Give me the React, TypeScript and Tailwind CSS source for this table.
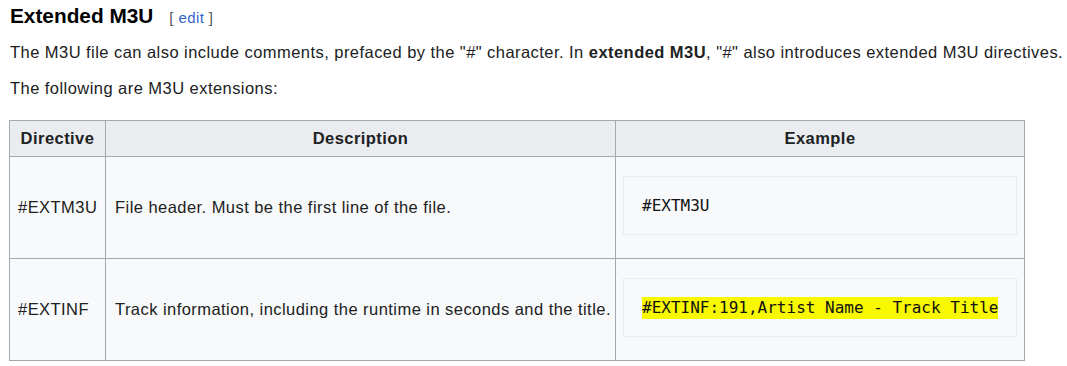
import React from "react";

const rows = [
  {
    directive: "#EXTM3U",
    description: "File header. Must be the first line of the file.",
    example: "#EXTM3U",
    highlight: false,
  },
  {
    directive: "#EXTINF",
    description:
      "Track information, including the runtime in seconds and the title.",
    example: "#EXTINF:191,Artist Name - Track Title",
    highlight: true,
  },
];

const App: React.FC = () => {
  return (
    <div
      className="bg-white text-[#202122] w-[1067px] h-[366px] overflow-hidden pl-[10px]"
      style={{ fontFamily: '"Liberation Sans", Arial, sans-serif' }}
    >
      {/* Heading */}
      <div className="flex items-baseline pt-[1px] h-[30px]">
        <h3 className="text-[20.8px] font-bold leading-[30px] text-black">
          Extended M3U
        </h3>
        <span className="ml-[16px] text-[15px] tracking-[0.4px] text-[#54595d]">
          [ <span className="text-[#3366cc]">edit</span> ]
        </span>
      </div>

      {/* Intro */}
      <p className="mt-[10px] text-[16.5px] tracking-[0.45px] leading-[24px]">
        The M3U file can also include comments, prefaced by the "#" character.
        In <b>extended M3U</b>, "#" also introduces extended M3U directives.
      </p>
      <p className="mt-[12px] text-[16.5px] tracking-[0.45px] leading-[24px]">
        The following are M3U extensions:
      </p>

      {/* Table */}
      <table className="mt-[20px] -ml-[1px] border-collapse text-[16.5px] tracking-[0.45px] bg-[#f8f9fa]">
        <thead>
          <tr className="h-[36px]">
            <th className="w-[96px] border border-[#a2a9b1] bg-[#eaecf0] font-bold text-center px-0">
              Directive
            </th>
            <th className="w-[510px] border border-[#a2a9b1] bg-[#eaecf0] font-bold text-center">
              Description
            </th>
            <th className="w-[409px] border border-[#a2a9b1] bg-[#eaecf0] font-bold text-center">
              Example
            </th>
          </tr>
        </thead>
        <tbody>
          {rows.map((row) => (
            <tr key={row.directive} className="h-[102px]">
              <td className="border border-[#a2a9b1] pl-[8px] pr-[3px] whitespace-nowrap">
                {row.directive}
              </td>
              <td className="border border-[#a2a9b1] pl-[9px] pr-[4px] whitespace-nowrap">
                {row.description}
              </td>
              <td className="border border-[#a2a9b1] pl-[7px] pr-[7px] pb-[4px]">
                <div
                  className="h-[59px] border border-[#eaecf0] bg-[#f8f9fa] pl-[18px] flex items-center text-[16px] tracking-normal text-[#111]"
                  style={{ fontFamily: '"DejaVu Sans Mono", monospace' }}
                >
                  <span
                    className={
                      row.highlight ? "bg-[#f8f800] leading-[22px]" : "leading-[22px]"
                    }
                  >
                    {row.example}
                  </span>
                </div>
              </td>
            </tr>
          ))}
        </tbody>
      </table>
    </div>
  );
};

export default App;
